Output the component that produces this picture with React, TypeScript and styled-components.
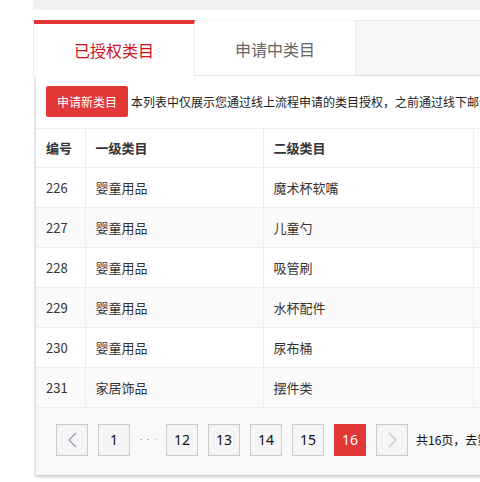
import React from "react";
import styled, { createGlobalStyle } from "styled-components";

const Global = createGlobalStyle`
  html, body { margin: 0; padding: 0; background: #fff; overflow: hidden; }
  body { font-family: "Noto Sans CJK SC", "Noto Sans", sans-serif; color: #333; }
  * { box-sizing: border-box; }
`;

const Page = styled.div`
  width: 480px;
  height: 482px;
  overflow: hidden;
  padding-left: 33px;
`;

const Inner = styled.div`
  width: 900px;
`;

const TopStrip = styled.div`
  height: 10px;
  background: #f1f1f1;
  margin-bottom: 10px;
`;

const TabBar = styled.div`
  display: flex;
  height: 56px;
  background: #f7f7f7;
  border-top: 1px solid #ebebeb;
  border-left: 1px solid #ebebeb;
  border-bottom: 1px solid #ececec;
`;

const Tab = styled.div<{ $active?: boolean }>`
  width: 161px;
  background: #fff;
  display: flex;
  align-items: center;
  justify-content: center;
  font-size: 16px;
  line-height: 20px;
  color: ${(p) => (p.$active ? "#d0101c" : "#666")};
  border-top: ${(p) => (p.$active ? "4px solid #e23737" : "1px solid #f7f7f7")};
  border-right: 1px solid #ececec;
  margin-top: -1px;
  margin-bottom: ${(p) => (p.$active ? "-1px" : "0")};
  padding-top: ${(p) => (p.$active ? "0" : "2px")};
`;

const Panel = styled.div`
  margin-left: 3px;
  background: #fff;
  box-shadow: 0 2px 3px rgba(0, 0, 0, 0.2), -1px 0 3px rgba(0, 0, 0, 0.1);
`;

const Toolbar = styled.div`
  display: flex;
  align-items: center;
  gap: 3px;
  height: 53px;
  padding: 0 10px;
  border-bottom: 1px solid #eee;
  white-space: nowrap;
  overflow: hidden;
`;

const RedButton = styled.button`
  height: 31px;
  padding: 0 11px;
  border: none;
  border-radius: 2px;
  background: #e23737;
  color: #fff;
  font-family: inherit;
  font-size: 12px;
  line-height: 31px;
  margin-top: -1px;
`;

const Notice = styled.span`
  font-size: 12px;
  line-height: 16px;
  color: #222;
  margin-top: -1px;
`;

const Table = styled.table`
  border-collapse: collapse;
  table-layout: fixed;
  width: 720px;
`;

const HeadCell = styled.th<{ $w: number }>`
  width: ${(p) => p.$w}px;
  height: 38px;
  padding: 0 10px;
  text-align: left;
  font-size: 13px;
  font-weight: bold;
  color: #333;
  border-right: 1px solid #eee;
  border-bottom: 1px solid #eee;
`;

const Row = styled.tr<{ $alt?: boolean }>`
  background: ${(p) => (p.$alt ? "#fafafa" : "#fff")};
`;

const Cell = styled.td`
  height: 40px;
  padding: 0 10px;
  font-size: 13px;
  color: #333;
  border-right: 1px solid #eee;
  border-bottom: 1px solid #eee;
  white-space: nowrap;
`;

const Pager = styled.div`
  display: flex;
  align-items: center;
  gap: 10px;
  background: #f8f8f8;
  padding: 16px 20px 19px;
  white-space: nowrap;
  overflow: hidden;
`;

const PageBtn = styled.div<{ $current?: boolean }>`
  flex: none;
  width: 32px;
  height: 32px;
  display: flex;
  align-items: center;
  justify-content: center;
  font-family: "Noto Sans", sans-serif;
  font-size: 14px;
  color: ${(p) => (p.$current ? "#fff" : "#111")};
  background: ${(p) => (p.$current ? "#e23737" : "#f5f5f5")};
  border: 1px solid ${(p) => (p.$current ? "#e23737" : "#ccc")};
`;

const Dots = styled.div`
  flex: none;
  width: 16px;
  display: flex;
  justify-content: space-between;
  align-items: center;
  height: 32px;
`;

const Dot = styled.span`
  width: 1.5px;
  height: 1.5px;
  border-radius: 50%;
  background: #aaa;
`;

const PagerText = styled.span`
  font-size: 12px;
  color: #111;
  margin-left: -2px;
`;

const Chevron = ({ dir, color }: { dir: "l" | "r"; color: string }) => (
  <svg width="9" height="16" viewBox="0 0 9 16">
    <polyline
      points={dir === "l" ? "8,1 1,8 8,15" : "1,1 8,8 1,15"}
      fill="none"
      stroke={color}
      strokeWidth="1.2"
    />
  </svg>
);

const rows = [
  ["226", "婴童用品", "魔术杯软嘴"],
  ["227", "婴童用品", "儿童勺"],
  ["228", "婴童用品", "吸管刷"],
  ["229", "婴童用品", "水杯配件"],
  ["230", "婴童用品", "尿布桶"],
  ["231", "家居饰品", "摆件类"],
];

export default function App() {
  return (
    <Page>
      <Global />
      <Inner>
        <TopStrip />
        <TabBar>
          <Tab $active>已授权类目</Tab>
          <Tab>申请中类目</Tab>
        </TabBar>
        <Panel>
          <Toolbar>
            <RedButton>申请新类目</RedButton>
            <Notice>
              本列表中仅展示您通过线上流程申请的类目授权，之前通过线下邮件申请的类目授权请在经营类目中查看。
            </Notice>
          </Toolbar>
          <Table>
            <thead>
              <tr>
                <HeadCell $w={49}>编号</HeadCell>
                <HeadCell $w={178}>一级类目</HeadCell>
                <HeadCell $w={210}>二级类目</HeadCell>
                <HeadCell $w={283} />
              </tr>
            </thead>
            <tbody>
              {rows.map((r, i) => (
                <Row key={r[0]} $alt={i % 2 === 1}>
                  <Cell>{r[0]}</Cell>
                  <Cell>{r[1]}</Cell>
                  <Cell>{r[2]}</Cell>
                  <Cell />
                </Row>
              ))}
            </tbody>
          </Table>
          <Pager>
            <PageBtn>
              <Chevron dir="l" color="#8a9bb0" />
            </PageBtn>
            <PageBtn>1</PageBtn>
            <Dots>
              <Dot />
              <Dot />
              <Dot />
            </Dots>
            <PageBtn>12</PageBtn>
            <PageBtn>13</PageBtn>
            <PageBtn>14</PageBtn>
            <PageBtn>15</PageBtn>
            <PageBtn $current>16</PageBtn>
            <PageBtn>
              <Chevron dir="r" color="#c8c8c8" />
            </PageBtn>
            <PagerText>共16页，去第</PagerText>
          </Pager>
        </Panel>
      </Inner>
    </Page>
  );
}
